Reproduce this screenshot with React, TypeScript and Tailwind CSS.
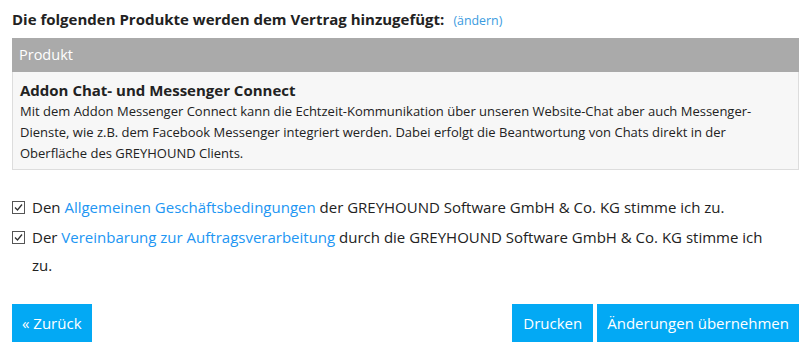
import React from "react";

function Check() {
  return (
    <svg width="13" height="13" viewBox="0 0 13 13" className="shrink-0">
      <rect x="0.5" y="0.5" width="12" height="12" fill="#fff" stroke="#555" />
      <path d="M3 6.5 L5.5 9 L10 3.5" fill="none" stroke="#333" strokeWidth="1.3" />
    </svg>
  );
}

export default function App() {
  return (
    <div className="w-[811px] h-[357px] bg-white text-[#222] px-3 pt-[9px]" style={{ fontFamily: '"Open Sans", sans-serif' }}>
      <div className="flex items-baseline gap-[9px] h-[29px]">
        <span className="text-[15px] font-bold leading-[20px]">Die folgenden Produkte werden dem Vertrag hinzugefügt:</span>
        <span className="text-[12.4px] text-[#3a9be0]">(ändern)</span>
      </div>
      <div className="w-[787px]">
        <div className="bg-[#aaaaaa] h-[34px] flex items-center px-[7px] text-white text-[14.5px]">Produkt</div>
        <div className="bg-[#f7f7f7] border border-t-0 border-[#dddddd] px-[7px] pt-[7px] pb-[5px]">
          <div className="text-[15px] font-bold leading-[22px]">Addon Chat- und Messenger Connect</div>
          <div className="text-[13px] leading-[21px]">
            Mit dem Addon Messenger Connect kann die Echtzeit-Kommunikation über unseren Website-Chat aber auch Messenger-Dienste, wie z.B. dem Facebook Messenger integriert werden. Dabei erfolgt die Beantwortung von Chats direkt in der Oberfläche des GREYHOUND Clients.
          </div>
        </div>
      </div>
      <div className="mt-[23px] text-[15px] leading-[28px] flex flex-col gap-[2px]">
        <div className="flex items-start gap-[7px]">
          <div className="pt-[8px]"><Check /></div>
          <div>
            Den <span className="text-[#2196f3]">Allgemeinen Geschäftsbedingungen</span> der GREYHOUND Software GmbH &amp; Co. KG stimme ich zu.
          </div>
        </div>
        <div className="flex items-start gap-[7px]">
          <div className="pt-[8px]"><Check /></div>
          <div className="w-[740px]">
            Der <span className="text-[#2196f3]">Vereinbarung zur Auftragsverarbeitung</span> durch die GREYHOUND Software GmbH &amp; Co. KG stimme ich zu.
          </div>
        </div>
      </div>
      <div className="mt-[25px] flex justify-between w-[787px]">
        <button className="bg-[#03a9f4] text-white text-[15px] h-[38px] px-[10px]">« Zurück</button>
        <div className="flex gap-[4px]">
          <button className="bg-[#03a9f4] text-white text-[15px] h-[38px] px-[11px]">Drucken</button>
          <button className="bg-[#03a9f4] text-white text-[15px] h-[38px] px-[10px]">Änderungen übernehmen</button>
        </div>
      </div>
    </div>
  );
}
